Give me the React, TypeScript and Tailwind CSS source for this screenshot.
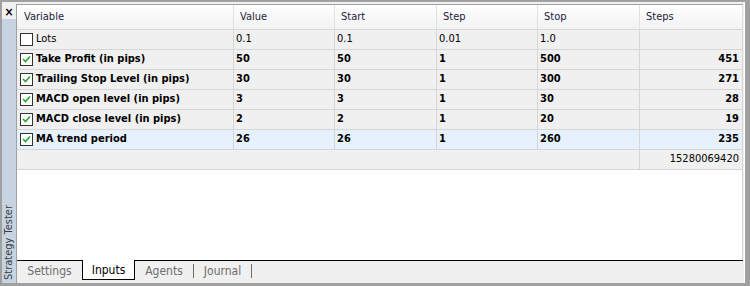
import React from "react";

const W = ["w-[217px]", "w-[101px]", "w-[102px]", "w-[101px]", "w-[102px]", "w-[103px]"];

type Row = { name: string; checked: boolean; v: string; s: string; st: string; sp: string; steps: string; bold: boolean; hl?: boolean };

const rows: Row[] = [
  { name: "Lots", checked: false, v: "0.1", s: "0.1", st: "0.01", sp: "1.0", steps: "", bold: false },
  { name: "Take Profit (in pips)", checked: true, v: "50", s: "50", st: "1", sp: "500", steps: "451", bold: true },
  { name: "Trailing Stop Level (in pips)", checked: true, v: "30", s: "30", st: "1", sp: "300", steps: "271", bold: true },
  { name: "MACD open level (in pips)", checked: true, v: "3", s: "3", st: "1", sp: "30", steps: "28", bold: true },
  { name: "MACD close level (in pips)", checked: true, v: "2", s: "2", st: "1", sp: "20", steps: "19", bold: true },
  { name: "MA trend period", checked: true, v: "26", s: "26", st: "1", sp: "260", steps: "235", bold: true, hl: true },
];

function Check({ checked }: { checked: boolean }) {
  return (
    <div className="w-[13px] h-[13px] border border-[#333] bg-white flex items-center justify-center shrink-0">
      {checked && (
        <svg width="11" height="11" viewBox="0 0 11 11">
          <path d="M2 5 L4.5 7.5 L9 2.5" stroke="#2aa52a" strokeWidth="1.6" fill="none" />
        </svg>
      )}
    </div>
  );
}

export default function App() {
  const font = { fontFamily: "'DejaVu Sans Condensed', Tahoma, 'DejaVu Sans', sans-serif" };
  return (
    <div
      className="w-[750px] h-[286px] bg-[#f0f0f0] border-t-2 border-l-2 border-r-[5px] border-b-[3px] border-[#a0a0a0] flex text-[11px] text-black overflow-hidden"
      style={font}
    >
      {/* sidebar */}
      <div className="w-[14px] flex flex-col shrink-0">
        <div className="h-[17px] flex items-start justify-center pt-[4px] text-[12px] font-bold leading-none text-black">×</div>
        <div className="flex-1 bg-[#c6d4e2] flex flex-col justify-end items-center pb-[3px]">
          <div className="[writing-mode:vertical-rl] rotate-180 text-[#3c3c3c] text-[11px] leading-[14px] whitespace-nowrap">Strategy Tester</div>
        </div>
      </div>

      {/* panel */}
      <div className="w-[727px] mt-[2px] border-l border-t border-[#a0a0a0] flex flex-col shrink-0">
        {/* header */}
        <div className="h-[25px] flex border-b border-[#d5d5d5] bg-gradient-to-b from-white to-[#f1f2f4] shrink-0">
          {["Variable", "Value", "Start", "Step", "Stop", "Steps"].map((h, i) => (
            <div key={h} className={`${W[i]} h-full border-r border-[#e1e2e4] flex items-center ${i === 0 ? "pl-[7px]" : "pl-[6px]"} text-[#1c1c38]`}>
              {h}
            </div>
          ))}
        </div>
        {rows.map((r) => (
          <div key={r.name} className={`h-[20px] flex border-b border-[#d6d6d6] shrink-0 ${r.hl ? "bg-[#e6f1fb]" : ""} ${r.bold ? "font-bold" : ""}`}>
            <div className={`${W[0]} h-full border-r border-[#d6d6d6] flex items-center pl-[3px] gap-[3px]`}>
              <Check checked={r.checked} />
              <span>{r.name}</span>
            </div>
            <div className={`${W[1]} h-full border-r border-[#d6d6d6] flex items-center pl-[2px]`}>{r.v}</div>
            <div className={`${W[2]} h-full border-r border-[#d6d6d6] flex items-center pl-[2px]`}>{r.s}</div>
            <div className={`${W[3]} h-full border-r border-[#d6d6d6] flex items-center pl-[2px]`}>{r.st}</div>
            <div className={`${W[4]} h-full border-r border-[#d6d6d6] flex items-center pl-[2px]`}>{r.sp}</div>
            <div className={`${W[5]} h-full border-r border-[#d6d6d6] flex items-center justify-end pr-[3px]`}>{r.steps}</div>
          </div>
        ))}
        <div className="h-[20px] flex border-b border-[#d6d6d6] shrink-0">
          <div className="w-[623px] h-full border-r border-[#d6d6d6]" />
          <div className={`${W[5]} h-full border-r border-[#d6d6d6] flex items-center justify-end pr-[3px]`}>15280069420</div>
        </div>
        <div className="flex-1 bg-white border-r border-[#d6d6d6]" />
        {/* tabs */}
        <div className="h-[23px] border-t border-black flex items-start shrink-0 text-[12px]">
          <div className="w-[65px] h-[19px] flex items-center justify-center text-[#6d6d6d]">Settings</div>
          <div className="w-[53px] h-[20px] -mt-px border-l border-r border-b border-black border-t-0 bg-white flex items-center justify-center text-black">Inputs</div>
          <div className="w-[58px] h-[19px] flex items-center justify-center text-[#6d6d6d]">Agents</div>
          <div className="w-px h-[14px] mt-[3px] bg-[#6d6d6d]" />
          <div className="w-[57px] h-[19px] flex items-center justify-center text-[#6d6d6d]">Journal</div>
          <div className="w-px h-[14px] mt-[3px] bg-[#6d6d6d]" />
        </div>
      </div>
      <div className="flex-1 flex">
        <div className="w-px" />
        <div className="w-px bg-white" />
      </div>
    </div>
  );
}
